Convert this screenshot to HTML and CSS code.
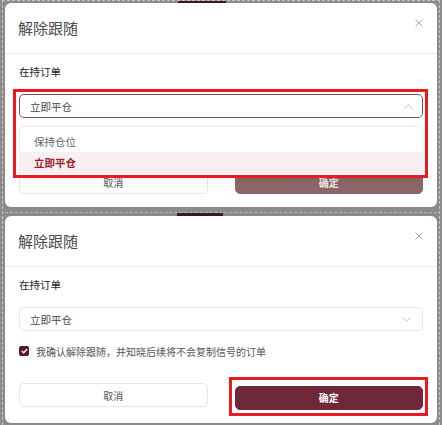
FILE: index.html
```html
<!DOCTYPE html>
<html lang="zh-CN">
<head>
  <meta charset="UTF-8">
  <meta name="viewport" content="width=device-width, initial-scale=1.0">
  <title>解除跟随</title>
  <link rel="stylesheet" href="styles.css">
</head>
<body>
  <div class="page">
    <div class="peek peek-top"></div>

    <!-- state 1: dropdown open -->
    <section class="dialog">
      <header class="dialog-head">
        <h2 class="dialog-title">解除跟随</h2>
        <button class="dialog-close" aria-label="关闭">
          <svg width="8" height="8" viewBox="0 0 8 8"><path d="M0.5 0.5L7.5 7.5M7.5 0.5L0.5 7.5" stroke="#a8a8a8" stroke-width="1" fill="none"/></svg>
        </button>
      </header>
      <div class="dialog-body">
        <div class="field-label">在持订单</div>
        <div class="select-wrap">
          <div class="select is-open">
            <span>立即平仓</span>
            <svg class="chevron" width="9" height="5" viewBox="0 0 9 5"><path d="M0.5 4.5L4.5 0.8L8.5 4.5" stroke="#c4c4c4" stroke-width="1" fill="none"/></svg>
          </div>
          <ul class="dropdown">
            <li>保持仓位</li>
            <li class="is-active">立即平仓</li>
          </ul>
          <div class="mark mark-select"></div>
        </div>
        <!-- covered by the open dropdown -->
        <label class="agree is-covered">
          <span class="checkbox"></span>
          我确认解除跟随，并知晓后续将不会复制信号的订单
        </label>
        <div class="actions">
          <button class="btn">取消</button>
          <button class="btn btn-primary is-muted">确定</button>
        </div>
      </div>
    </section>

    <div class="seam"></div>
    <div class="peek peek-mid"></div>

    <!-- state 2: checked, confirm -->
    <section class="dialog">
      <header class="dialog-head">
        <h2 class="dialog-title">解除跟随</h2>
        <button class="dialog-close" aria-label="关闭">
          <svg width="8" height="8" viewBox="0 0 8 8"><path d="M0.5 0.5L7.5 7.5M7.5 0.5L0.5 7.5" stroke="#a8a8a8" stroke-width="1" fill="none"/></svg>
        </button>
      </header>
      <div class="dialog-body">
        <div class="field-label">在持订单</div>
        <div class="select-wrap">
          <div class="select">
            <span>立即平仓</span>
            <svg class="chevron" width="9" height="5" viewBox="0 0 9 5"><path d="M0.5 0.5L4.5 4.2L8.5 0.5" stroke="#c4c4c4" stroke-width="1" fill="none"/></svg>
          </div>
        </div>
        <label class="agree">
          <span class="checkbox is-checked">
            <svg width="7" height="6" viewBox="0 0 7 6"><path d="M0.8 3L2.7 4.8L6.2 1" stroke="#fff" stroke-width="1.3" fill="none"/></svg>
          </span>
          我确认解除跟随，并知晓后续将不会复制信号的订单
        </label>
        <div class="actions">
          <button class="btn">取消</button>
          <div class="btn-wrap">
            <button class="btn btn-primary">确定</button>
            <div class="mark mark-btn"></div>
          </div>
        </div>
      </div>
    </section>
  </div>
</body>
</html>
```

FILE: styles.css
```css
* {
  box-sizing: border-box;
}
body {
  margin: 0;
  background: #8b8b8b;
  font-family: "Noto Sans CJK SC", "Noto Sans", sans-serif;
  color: #333;
}
.page {
  margin: 0 2px;
  height: 425px;
  border: 1px dashed #c9c9c9;
  border-bottom: none;
  padding: 0 2px 5px;
}
.peek {
  height: 2px;
  width: 48px;
  background: #3b1820;
}
.peek-top {
  margin-left: 173px;
}
.peek-mid {
  height: 3px;
  width: 46px;
  margin-left: 172px;
}
.seam {
  height: 6px;
  border-bottom: 1px dashed #b9b9b9;
}
.dialog {
  background: #fff;
  border-radius: 6px;
}
.dialog-head {
  height: 51px;
  display: flex;
  justify-content: space-between;
  align-items: center;
  padding: 0 14px 0 13px;
  border-bottom: 1px solid #ececec;
}
.dialog-title {
  margin: 0;
  font-size: 15px;
  font-weight: 400;
  color: #4a4a4a;
  line-height: 20px;
}
.dialog-close {
  align-self: flex-start;
  margin-top: 16px;
  width: 8px;
  height: 8px;
  padding: 0;
  border: none;
  background: none;
  display: flex;
}
.dialog-body {
  padding: 10px 14px 13px;
}
.field-label {
  font-size: 10.5px;
  line-height: 16px;
  color: #222;
}
.select-wrap {
  position: relative;
  margin-top: 14px;
}
.select {
  height: 24px;
  border: 1px solid #e6e6e6;
  border-radius: 5px;
  display: flex;
  align-items: center;
  justify-content: space-between;
  padding: 0 11px 0 10px;
  font-size: 10.5px;
  color: #444;
}
.select.is-open {
  border-color: #7b4f58;
  padding-right: 9px;
}
.dropdown {
  position: absolute;
  top: calc(100% + 8px);
  left: 0;
  right: 0;
  margin: 0;
  padding: 4px 0;
  list-style: none;
  background: #fff;
  border: 1px solid #eeeeee;
  border-radius: 4px;
  box-shadow: 0 2px 8px rgba(0, 0, 0, 0.06);
  z-index: 2;
}
.dropdown li {
  height: 21px;
  line-height: 21px;
  padding-left: 14px;
  font-size: 10.5px;
  color: #666;
}
.dropdown li.is-active {
  background: #f8eff0;
  color: #9a1e2c;
  font-weight: 700;
}
.mark {
  position: absolute;
  border: 3px solid #ea1922;
  z-index: 3;
}
.mark-select {
  top: -5px;
  left: -6px;
  right: -5px;
  bottom: -60px;
}
.agree {
  margin-top: 12px;
  height: 16px;
  display: flex;
  align-items: center;
  gap: 7px;
  font-size: 10px;
  color: #555;
}
.agree.is-covered {
  visibility: hidden;
}
.checkbox {
  width: 10px;
  height: 10px;
  border: 1px solid #d6d6d6;
  border-radius: 2px;
  display: flex;
  align-items: center;
  justify-content: center;
}
.checkbox.is-checked {
  background: #561b25;
  border-color: #561b25;
}
.actions {
  margin-top: 24px;
  display: grid;
  grid-template-columns: 1fr 1fr;
  gap: 27px;
}
.btn {
  height: 24px;
  width: 100%;
  border: 1px solid #e6e6e6;
  border-radius: 5px;
  background: #fff;
  font: inherit;
  font-size: 10px;
  color: #555;
  padding: 0;
}
.btn-primary {
  background: #6e2839;
  border-color: #6e2839;
  color: #fff;
  font-weight: 700;
}
.btn-primary.is-muted {
  background: #8b6666;
  border-color: #8b6666;
  color: #f1e6e6;
}
.btn-wrap {
  position: relative;
}
.mark-btn {
  top: -6px;
  left: -6px;
  right: -5px;
  bottom: -6px;
}
```
